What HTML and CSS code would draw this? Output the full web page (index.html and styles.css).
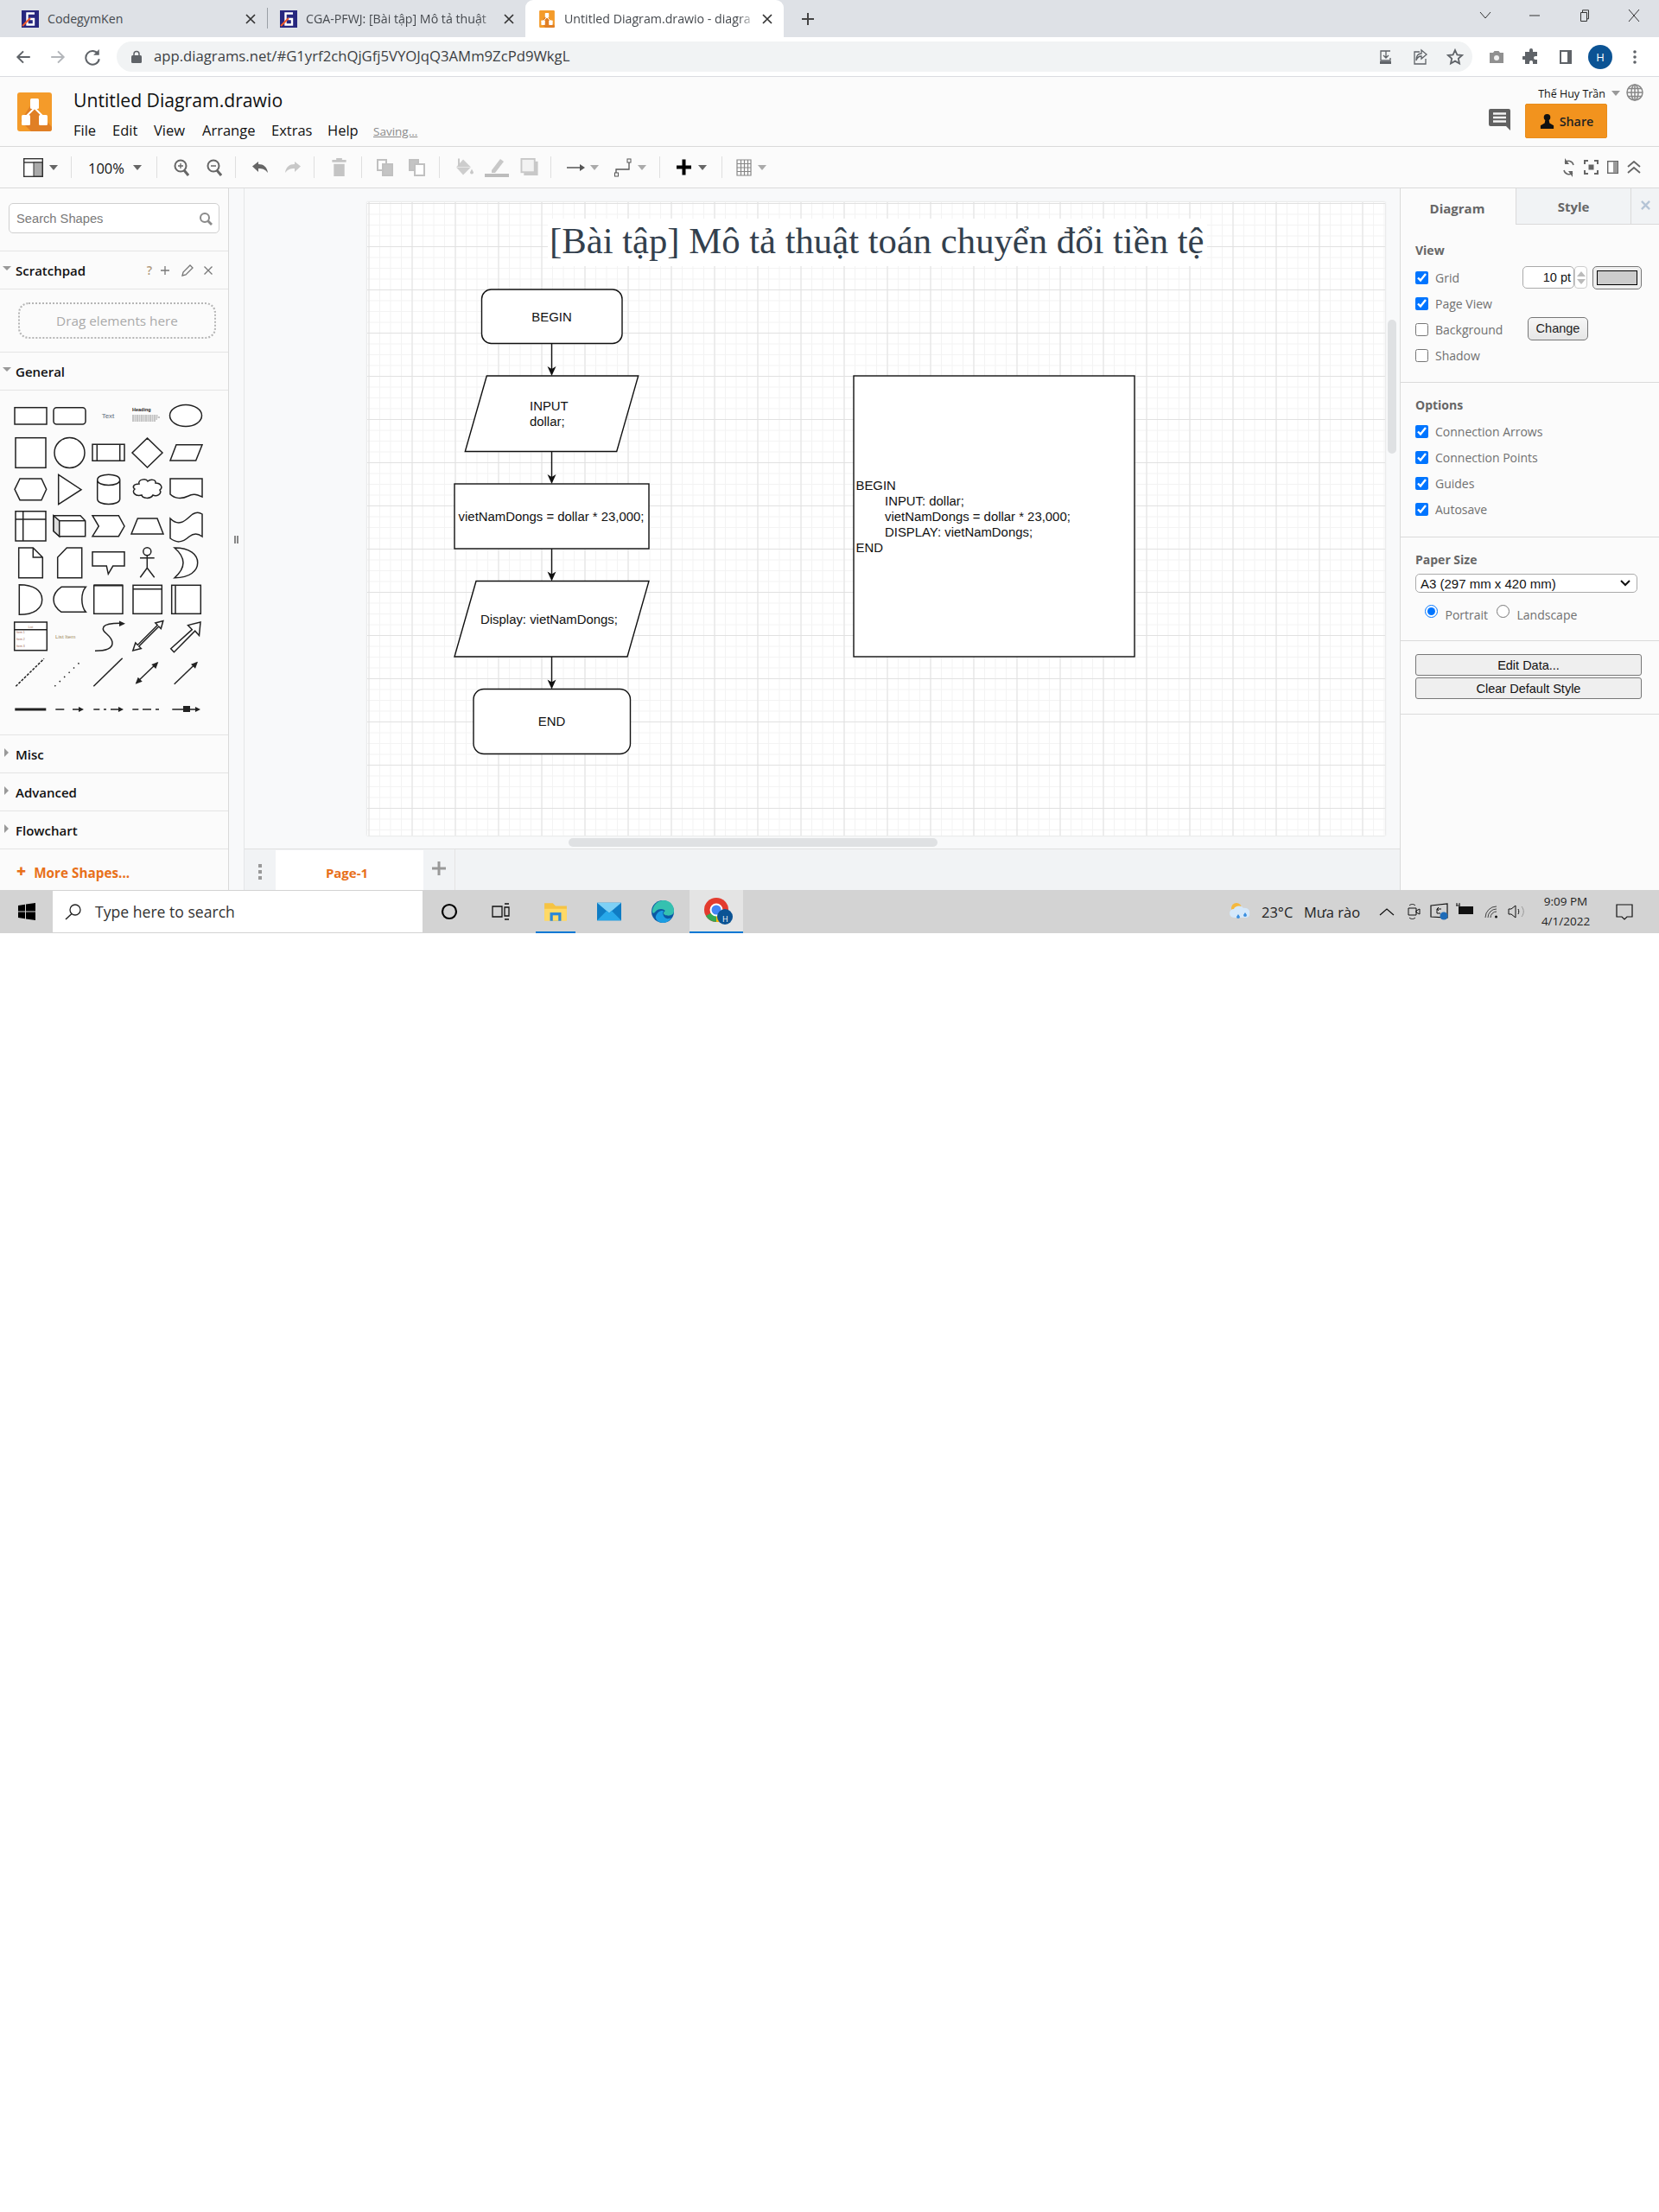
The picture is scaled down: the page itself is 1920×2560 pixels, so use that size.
FILE: index.html
```html
<!DOCTYPE html>
<html lang="en">
<head>
<meta charset="utf-8">
<title>Untitled Diagram.drawio - diagrams.net</title>
<link rel="stylesheet" href="styles.css">
</head>
<body>
<div class="screen">
  <svg class="defs" width="0" height="0">
    <defs>
      <symbol id="cg" viewBox="0 0 20 20"><rect width="20" height="20" fill="#27277f"/><path d="M15 3.500H6.500v13H14v-6.500H9.500" fill="none" stroke="#fff" stroke-width="2.400"/><path d="M1 18 10 9" stroke="#f0592a" stroke-width="2"/></symbol>
      <symbol id="dio" viewBox="0 0 40 45"><rect width="40" height="45" rx="3" fill="#f49b2a"/><path d="M16 14 40 40v2a3 3 0 0 1-3 3H16L4 33Z" fill="#e07f25"/><path d="M20 18 10 28M20 18l10 10" stroke="#fff" stroke-width="2"/><rect x="15" y="7" width="10" height="12" rx="1.500" fill="#fff"/><rect x="5" y="26" width="10" height="12" rx="1.500" fill="#fff"/><rect x="25" y="26" width="10" height="12" rx="1.500" fill="#fff"/></symbol>
    </defs>
  </svg>

  <div class="tabstrip">
    <div class="tab">
      <svg class="fav"><use href="#cg"/></svg><span class="tab-title">CodegymKen</span>
      <svg class="tab-x" viewBox="0 0 12 12"><path d="M1 1l10 10M11 1 1 11"/></svg>
    </div>
    <div class="tab tab-sep">
      <svg class="fav"><use href="#cg"/></svg><span class="tab-title fade">CGA-PFWJ: [Bài tập] Mô tả thuật</span>
      <svg class="tab-x" viewBox="0 0 12 12"><path d="M1 1l10 10M11 1 1 11"/></svg>
    </div>
    <div class="tab tab-active">
      <svg class="fav"><use href="#dio"/></svg><span class="tab-title fade">Untitled Diagram.drawio - diagra</span>
      <svg class="tab-x" viewBox="0 0 12 12"><path d="M1 1l10 10M11 1 1 11"/></svg>
    </div>
    <svg class="newtab" viewBox="0 0 16 16"><path d="M8 1v14M1 8h14"/></svg>
    <div class="winctl">
      <div class="wc"><svg viewBox="0 0 14 10"><path d="M1 1l6 7 6-7"/></svg></div>
      <div class="wc"><svg viewBox="0 0 14 10"><path d="M1 5h12"/></svg></div>
      <div class="wc"><svg viewBox="0 0 14 14"><path d="M2.500 3.500h7v10h-7zM4.500 3.500V.8h7v10H9.500"/></svg></div>
      <div class="wc"><svg viewBox="0 0 14 14"><path d="M1 0l12 14M13 0 1 14"/></svg></div>
    </div>
  </div>

  <div class="addressrow">
    <div class="nav"><svg viewBox="0 0 18 18"><path d="M16 9H3M9 3 3 9l6 6" class="s-dark"/></svg></div>
    <div class="nav"><svg viewBox="0 0 18 18"><path d="M2 9h13M9 3l6 6-6 6" class="s-light"/></svg></div>
    <div class="nav"><svg viewBox="0 0 18 18"><path d="M15 6a7 7 0 1 0 1 5" class="s-dark"/><path d="M16 1v6h-6z" fill="#5f6368"/></svg></div>
    <div class="omnibox">
      <svg class="lock" viewBox="0 0 12 15"><path d="M3 7V4.500a3 3 0 0 1 6 0V7" fill="none" stroke="#5f6368" stroke-width="1.500"/><rect y="6" width="12" height="9" rx="1.500" fill="#5f6368"/></svg>
      <span class="url">app.diagrams.net/#G1yrf2chQjGfj5VYOJqQ3AMm9ZcPd9WkgL</span>
      <div class="omni-right">
        <div class="nav"><svg viewBox="0 0 20 20"><path d="M15 3H4v11h11V11M10 3v8M7 8l3 3 3-3" class="s-dark s-thin"/><rect x="3" y="15" width="13" height="3" fill="#5f6368"/></svg></div>
        <div class="nav"><svg viewBox="0 0 20 20"><path d="M9 4H3v14h13v-6M11 2l6 5-6 5V9c-4 0-5 2-6 5 0-5 2-8 6-8z" class="s-dark s-thin"/></svg></div>
        <div class="nav"><svg viewBox="0 0 20 20"><path d="m10 2 2.400 5.400 5.600.6-4.200 3.800 1.200 5.700L10 14.600l-5 2.900 1.200-5.700L2 8l5.600-.6z" class="s-dark"/></svg></div>
      </div>
    </div>
    <div class="extras">
      <div class="nav"><svg viewBox="0 0 20 20"><path d="M2 5h4l1.500-2h5L14 5h4v12H2z" fill="#909090"/><circle cx="10" cy="11" r="3" fill="#f1f1f1"/></svg></div>
      <div class="nav"><svg viewBox="0 0 20 20"><path d="M8 2a2 2 0 0 1 4 0v2h5v5h-2a2 2 0 0 0 0 4h2v5h-5v-2a2 2 0 0 0-4 0v2H3v-5H1a2 2 0 0 1 0-4h2V4h5z" fill="#5f6368"/></svg></div>
      <div class="nav"><svg viewBox="0 0 20 20"><rect x="3" y="2" width="14" height="16" fill="#5f6368"/><rect x="5" y="4" width="7" height="12" fill="#fff"/></svg></div>
      <div class="avatar">H</div>
      <div class="nav"><svg viewBox="0 0 20 20"><circle cx="10" cy="4" r="1.800" fill="#5f6368"/><circle cx="10" cy="10" r="1.800" fill="#5f6368"/><circle cx="10" cy="16" r="1.800" fill="#5f6368"/></svg></div>
    </div>
  </div>

  <header class="appheader">
    <svg class="logo"><use href="#dio"/></svg>
    <div class="titlecol">
      <div class="doctitle">Untitled Diagram.drawio</div>
      <nav class="menu">
        <span>File</span><span>Edit</span><span>View</span><span>Arrange</span><span>Extras</span><span>Help</span><span class="saving">Saving...</span>
      </nav>
    </div>
    <div class="usercol">
      <div class="userrow">
        <span class="username">Thế Huy Trần</span><i class="caret"></i>
        <svg class="globe" viewBox="0 0 20 20"><g fill="none" stroke="#888" stroke-width="1.500"><circle cx="10" cy="10" r="9"/><ellipse cx="10" cy="10" rx="4" ry="9"/><path d="M1 10h18M2.500 5.500h15M2.500 14.500h15M10 1v18"/></g></svg>
      </div>
      <div class="sharerow">
        <svg class="chat" viewBox="0 0 25 25"><path d="M2 0h21a2 2 0 0 1 2 2v18l0 5-5-5H2a2 2 0 0 1-2-2V2a2 2 0 0 1 2-2z" fill="#616161"/><path d="M5 5.500h15M5 10h15M5 14.500h15" stroke="#f4f4f4" stroke-width="2.500"/></svg>
        <div class="sharebtn">
          <svg viewBox="0 0 20 20"><circle cx="10" cy="5" r="4" fill="#111"/><path d="M8 7h4l1 5 5 3v4H2v-4l5-3z" fill="#111"/></svg>
          <span>Share</span>
        </div>
      </div>
    </div>
  </header>

  <div class="toolbar">
    <div class="tg g1">
      <svg class="i23" viewBox="0 0 23 22"><rect x=".7" y=".7" width="21.600" height="20.600" fill="#fff" stroke="#333" stroke-width="1.400"/><path d="M1 5h21" stroke="#333" stroke-width="1.400"/><rect x="12" y="5" width="10" height="16" fill="#aaa" stroke="#333"/></svg><i class="caret"></i>
    </div>
    <div class="tg g2"><span class="zoomtxt">100%</span><i class="caret"></i></div>
    <div class="tg g3">
      <svg class="i18" viewBox="0 0 18 20"><circle cx="8" cy="8" r="6.500" fill="none" stroke="#666" stroke-width="2"/><path d="m12 13 5 6" stroke="#666" stroke-width="3"/><path d="M5 8h6M8 5v6" stroke="#666" stroke-width="1.300"/></svg>
      <svg class="i18" viewBox="0 0 18 20"><circle cx="8" cy="8" r="6.500" fill="none" stroke="#666" stroke-width="2"/><path d="m12 13 5 6" stroke="#666" stroke-width="3"/><path d="M5 8h6" stroke="#666" stroke-width="1.500"/></svg>
    </div>
    <div class="tg g4">
      <svg class="i20" viewBox="0 0 20 14"><path d="M8 3C14 3 18 6 19 13 16 9 13 8 8 8v4L1 5.500 8 0z" fill="#666"/></svg>
      <svg class="i20" viewBox="0 0 20 14"><path d="M12 3C6 3 2 6 1 13 4 9 7 8 12 8v4l7-6.500L12 0z" fill="#c8c8c8"/></svg>
    </div>
    <div class="tg g5">
      <svg class="i17" viewBox="0 0 17 22"><path d="M5 0h7v2h5v3H0V2h5zM2 7h13v15H2z" fill="#c4c4c4"/></svg>
    </div>
    <div class="tg g6">
      <svg class="i20" viewBox="0 0 20 20"><rect x="1" y="1" width="10" height="12" fill="#fff" stroke="#c0c0c0" stroke-width="2"/><rect x="7" y="6" width="11" height="13" fill="#c4c4c4" stroke="#c0c0c0" stroke-width="2"/></svg>
      <svg class="i20" viewBox="0 0 20 20"><rect x="1" y="1" width="10" height="12" fill="#c4c4c4" stroke="#c0c0c0" stroke-width="2"/><rect x="7" y="6" width="11" height="13" fill="#fff" stroke="#c0c0c0" stroke-width="2"/></svg>
    </div>
    <div class="tg g7">
      <svg class="i22" viewBox="0 0 22 20"><path d="M10 1 19 10 10 19 2 10z" fill="#cdcdcd"/><path d="M2 10h17" stroke="#e6e6e6"/><path d="M4 0h2v9H4zM20 12l2 4a2 2 0 0 1-4 0z" fill="#c8c8c8"/></svg>
      <svg class="i28" viewBox="0 0 28 22"><path d="M8 14 18 1l4 3-10 13H8z" fill="#c8c8c8"/><rect y="18" width="28" height="4" fill="#bdbdbd"/></svg>
      <svg class="i22" viewBox="0 0 22 22"><rect x="4" y="4" width="17" height="17" fill="#c8c8c8"/><rect x="1" y="1" width="16" height="16" fill="#f2f2f2" stroke="#c8c8c8" stroke-width="2"/></svg>
    </div>
    <div class="tg g8">
      <svg class="i21" viewBox="0 0 21 10"><path d="M0 5h16" stroke="#555" stroke-width="1.500"/><path d="m15 1 6 4-6 4z" fill="#555"/></svg><i class="caret c-light"></i>
      <svg class="i21b" viewBox="0 0 21 22"><path d="M2 20v-7h15V3" fill="none" stroke="#555" stroke-width="1.300"/><rect x=".5" y="17" width="4" height="4" fill="#fff" stroke="#555"/><rect x="15" y="1" width="4" height="4" fill="#fff" stroke="#555"/></svg><i class="caret c-light"></i>
    </div>
    <div class="tg g9">
      <svg class="i17" viewBox="0 0 17 20"><path d="M6.500 1h4v7H17v4h-6.500v7h-4v-7H0V8h6.500z" fill="#000"/></svg><i class="caret"></i>
    </div>
    <div class="tg g10">
      <svg class="i18" viewBox="0 0 18 20"><path d="M1 1h16v18H1zM1 5.500h16M1 10h16M1 14.500h16M5.500 1v18M9.500 1v18M13.500 1v18" fill="none" stroke="#888" stroke-width="1.200"/></svg><i class="caret c-light"></i>
    </div>
    <div class="tb-right">
      <svg class="i15" viewBox="0 0 15 24"><path d="M13 9A6 6 0 0 0 3 6M2 15a6 6 0 0 0 10 3" fill="none" stroke="#666" stroke-width="1.500"/><path d="M3 1v7h5zM12 23v-7H7z" fill="#666"/></svg>
      <svg class="i17s" viewBox="0 0 17 17"><path d="M1 5V1h4M12 1h4v4M16 12v4h-4M5 16H1v-4" fill="none" stroke="#666" stroke-width="2"/><rect x="5.500" y="5.500" width="6" height="6" fill="#666"/></svg>
      <svg class="i13" viewBox="0 0 13 15"><rect x=".7" y=".7" width="11.600" height="13.600" fill="#fff" stroke="#666" stroke-width="1.400"/><rect x="7" y="1" width="5" height="13" fill="#999"/></svg>
      <svg class="i16" viewBox="0 0 16 15"><path d="m1 7 7-6 7 6M1 14l7-6 7 6" fill="none" stroke="#666" stroke-width="1.800"/></svg>
    </div>
  </div>

  <main class="main">
    <aside class="sidebar">
      <div class="searchwrap">
        <div class="searchbox"><span>Search Shapes</span>
          <svg viewBox="0 0 16 16"><circle cx="7" cy="7" r="5" fill="none" stroke="#8a8a8a" stroke-width="2"/><path d="m10.500 10.500 4.500 4.500" stroke="#8a8a8a" stroke-width="2.800"/></svg>
        </div>
      </div>
      <div class="sechead"><i class="tri-down"></i><span>Scratchpad</span>
        <div class="sp-tools">
          <b>?</b>
          <svg viewBox="0 0 12 12"><path d="M6 1v10M1 6h10"/></svg>
          <svg viewBox="0 0 14 14"><path d="M1 13l1-4 8-8 3 3-8 8z"/></svg>
          <svg viewBox="0 0 12 12"><path d="M1.500 1.500l9 9M10.500 1.500l-9 9"/></svg>
        </div>
      </div>
      <div class="dropwrap"><div class="dropzone">Drag elements here</div></div>
      <div class="sechead"><i class="tri-down"></i><span>General</span></div>
      <div class="palette">
        <svg viewBox="0 452 265 399" width="265" height="399">
          <g class="sh">
            <rect x="17" y="471.700" width="37" height="19.300"/>
            <rect x="62" y="471.700" width="37" height="19.300" rx="3.500"/>
            <ellipse cx="215" cy="481" rx="18.500" ry="12.500"/>
            <rect x="18" y="506.700" width="35" height="34.600"/>
            <circle cx="80.500" cy="524" r="17.500"/>
            <path d="M107 514.300h37v19h-37zM112.300 514.300v19M138.700 514.300v19"/>
            <path d="M170.500 507l17.500 17-17.500 17-17.500-17z"/>
            <path d="M204 514.700h30l-7.300 18.300H197z"/>
            <path d="M17 566.300 23 554h25l5.700 12.300L48 578.700H23z"/>
            <path d="M67.700 549.300 94 566.700l-26.300 17z"/>
            <path d="M112.700 555.500v22c0 8 26 8 26 0v-22c0-8.500-26-8.500-26 0c0 8 26 8 26 0"/>
            <path d="M161 560c-2-5 8-7 10-3 3-3 10-2 9 2 6 0 9 5 5 8 3 5-4 8-8 6-3 5-12 4-13 0-8 2-12-4-8-7-3-2-2-6 5-6z"/>
            <path d="M197 554h37v21c-7-3-11-4-16-1-8 4-16 3-21-2z"/>
            <path d="M18 591.700h35V626H18zM26.700 591.700V626M18 601h35"/>
            <path d="M62 596.700h31l5.700 6v18h-30l-6.700-6z" />
            <path d="M62 596.700l6.700 6v18l-6.700-6z" class="cubeside"/>
            <path d="M68.700 602.700h30"/>
            <path d="M107 596.700h30.300L144 609l-6.700 11.700H107l7.300-11.700z"/>
            <path d="M159.300 600H182l7 18h-37z"/>
            <path d="M197 600c12 12 20-1 26-5 5-3 8-2 11 0v26c-5-4-10-4-15 0-9 8-15 7-22 2z"/>
            <path d="M21.700 634H38.300l11 11v23.700H21.700zM38.300 634v11h11"/>
            <path d="M77.300 634h17.400v34.700h-28V645z"/>
            <path d="M107 638.700h37V655h-13.300l-5.400 9.300-2-9.300H107z"/>
            <path d="M170.300 643v14.300M162 645.700h16.700M162.300 668.300l8-11 8.400 11"/><circle cx="170.300" cy="638.300" r="4.500"/>
            <path d="M202 634c18 0 26.700 8 26.700 17.300S220 668.700 202 668.700c8-7 10-12 10-17.400S210 641 202 634z"/>
            <path d="M22.300 676.700c17 0 26.400 7 26.400 17.300s-9.400 17.300-26.400 17.300z"/>
            <path d="M71 679.300h28.300c-6 7-6 22 0 29H71c-12-8-12-21 0-29z"/>
            <rect x="108.700" y="677.300" width="33.300" height="33"/>
            <path d="M109 677.500h33" class="thick"/>
            <rect x="154" y="677.300" width="33.300" height="33"/><path d="M154 681.700h33.300"/>
            <rect x="198.700" y="677.300" width="33.600" height="33"/><path d="M203 677.300v33"/>
            <rect x="16.700" y="720" width="37.600" height="32.700"/><path d="M16.700 728.700h37.600"/>
            <path d="M110 753.300c10 0 20-2 20-9 0-10-14-12-10-19 3-4 13-4 19-4" class="open"/>
            <path d="m153.800 753 3-9 2.500 2.500 23-23-2.500-2.500 9-2.500-2.500 9-2.500-2.500-23 23 2.500 2.500z"/>
            <path d="M197.700 750.800l24.600-22.200-4.800-5 14.500-3.600-1.500 15.500-4.800-5.300-24.300 24.500z"/>
            <path d="M18.300 794.300 51 762.300" class="dash1"/>
            <path d="M63.300 794.300 95 764" class="dash2"/>
            <path d="M108.300 794.300 141.700 761.700"/>
            <path d="m158 790 24-23"/>
            <path d="m201.700 791.700 26-25"/>
            <path d="M17.300 821h36" class="thicker"/>
            <path d="M64.300 821h10M84 821h8M108.300 821h7M120 821h3M128 821h12M153.300 821h7M165 821h10M180 821h4M199.300 821h29"/>
          </g>
          <g class="shf">
            <path d="m138 718.500 7 3.200-7 3.200z"/>
            <path d="m156.700 791.700 3-8 5 5zM183.300 766l-8 3 5 5zM229 765.700l-8 3 5 5z"/>
            <path d="m91 818 6 3-6 3zM137 818l6 3-6 3zM226 818l6 3-6 3z"/>
            <rect x="212" y="817" width="8" height="7"/>
          </g>
          <text x="125" y="483.500" class="pal-text">Text</text>
          <text x="153" y="476" class="pal-head">Heading</text>
          <path d="M153 481h30M153 483h32M153 485h29M153 487h27" class="pal-lines"/>
          <text x="35.500" y="726.500" class="pal-list pal-c">List</text>
          <text x="19" y="733" class="pal-list">Item 1</text>
          <text x="19" y="741" class="pal-list">Item 2</text>
          <text x="19" y="749" class="pal-list">Item 3</text>
          <text x="64" y="738.500" class="pal-item">List Item</text>
        </svg>
      </div>
      <div class="sechead"><i class="tri-right"></i><span>Misc</span></div>
      <div class="sechead"><i class="tri-right"></i><span>Advanced</span></div>
      <div class="sechead"><i class="tri-right"></i><span>Flowchart</span></div>
      <div class="moreshapes"><b class="plus">+</b><span>More Shapes...</span></div>
    </aside>
    <div class="splitter"><i></i></div>
    <section class="canvas">
      <div class="viewport">
        <div class="page">
          <svg viewBox="425 234 1178 733" width="1178" height="733" class="diagram">
            <rect x="634" y="253" width="763" height="55" class="titlebg"/>
            <text x="636" y="293" class="d-title">[Bài tập] Mô tả thuật toán chuyển đổi tiền tệ</text>
            <g class="node">
              <rect x="557.500" y="335" width="162.500" height="62.500" rx="11"/>
              <path d="M563.300 435h175.400l-25 87.500H538.300z"/>
              <rect x="526" y="560" width="225" height="75"/>
              <path d="M551 672.500h200l-25 87.500H526z"/>
              <rect x="548" y="797.500" width="181.500" height="75" rx="12"/>
              <rect x="988" y="435" width="325" height="325"/>
            </g>
            <g class="edge">
              <path d="M638.500 397.500V430M638.500 522.500V555M638.500 635V667.500M638.500 760V792.500"/>
            </g>
            <g class="head">
              <path d="M638.500 435l-5-11 5 3 5-3zM638.500 560l-5-11 5 3 5-3zM638.500 672.500l-5-11 5 3 5-3zM638.500 797.500l-5-11 5 3 5-3z"/>
            </g>
            <g class="d-text">
              <text x="638.500" y="372" class="mid">BEGIN</text>
              <text x="613" y="474.500">INPUT</text>
              <text x="613" y="492.500">dollar;</text>
              <text x="638" y="603" class="mid">vietNamDongs = dollar * 23,000;</text>
              <text x="635.500" y="722" class="mid">Display: vietNamDongs;</text>
              <text x="638.500" y="840" class="mid">END</text>
              <text x="990.500" y="567">BEGIN</text>
              <text x="1024" y="585">INPUT: dollar;</text>
              <text x="1024" y="603">vietNamDongs = dollar * 23,000;</text>
              <text x="1024" y="621">DISPLAY: vietNamDongs;</text>
              <text x="990.500" y="639">END</text>
            </g>
          </svg>
        </div>
        <i class="scroll-v"></i>
        <i class="scroll-h"></i>
      </div>
      <div class="pagetabs">
        <div class="pt-menu"><i></i><i></i><i></i></div>
        <div class="pt-page">Page-1</div>
        <div class="pt-add"><svg viewBox="0 0 16 16"><path d="M8 0v16M0 8h16"/></svg></div>
      </div>
    </section>
    <aside class="panel">
      <div class="ptabs">
        <div class="ptab ptab-on">Diagram</div>
        <div class="ptab">Style</div>
        <div class="ptab-x"><svg viewBox="0 0 12 12"><path d="M1 1l10 10M11 1 1 11"/></svg></div>
      </div>
      <div class="psec">
        <h3>View</h3>
        <div class="prow"><input type="checkbox" checked><span>Grid</span>
          <div class="gridctl">
            <div class="ptbox">10 pt</div>
            <div class="spin"><i class="up"></i><i class="dn"></i></div>
            <div class="swatch"><i></i></div>
          </div>
        </div>
        <div class="prow"><input type="checkbox" checked><span>Page View</span></div>
        <div class="prow"><input type="checkbox"><span>Background</span><button class="changebtn">Change</button></div>
        <div class="prow"><input type="checkbox"><span>Shadow</span></div>
      </div>
      <div class="psec psec2">
        <h3>Options</h3>
        <div class="prow"><input type="checkbox" checked><span>Connection Arrows</span></div>
        <div class="prow"><input type="checkbox" checked><span>Connection Points</span></div>
        <div class="prow"><input type="checkbox" checked><span>Guides</span></div>
        <div class="prow"><input type="checkbox" checked><span>Autosave</span></div>
      </div>
      <div class="psec psec3">
        <h3>Paper Size</h3>
        <div class="selectbox"><span>A3 (297 mm x 420 mm)</span><svg viewBox="0 0 12 8"><path d="m1 1 5 5 5-5"/></svg></div>
        <div class="radios">
          <input type="radio" name="o" checked><span>Portrait</span>
          <input type="radio" name="o"><span>Landscape</span>
        </div>
      </div>
      <div class="psec4">
        <button class="widebtn">Edit Data...</button>
        <button class="widebtn">Clear Default Style</button>
      </div>
    </aside>
  </main>

  <footer class="taskbar">
    <div class="winbtn"><svg viewBox="0 0 20 20"><path d="M0 3l8-1.200V9.500H0zM9 1.600 20 0v9.500H9zM0 10.500h8v7.700L0 17zM9 10.500h11V20L9 18.400z" fill="#000"/></svg></div>
    <div class="tsearch">
      <svg viewBox="0 0 20 20"><circle cx="12" cy="8" r="6" fill="none" stroke="#222" stroke-width="1.300"/><path d="M8 12.500 1 19" stroke="#222" stroke-width="1.500"/></svg>
      <span>Type here to search</span>
    </div>
    <div class="tcell"><svg class="cortana" viewBox="0 0 20 20"><circle cx="10" cy="10" r="8" fill="none" stroke="#000" stroke-width="2.200"/></svg></div>
    <div class="tcell tview"><svg class="taskv" viewBox="0 0 22 20"><path d="M1 4h11v12H1zM15 1h5M15 19h5M15 5h5v10h-5z" fill="none" stroke="#111" stroke-width="1.300"/></svg></div>
    <div class="tapp on">
      <svg viewBox="0 0 26 24"><path d="M1 3h9l3 3h12v15H1z" fill="#f6c343"/><rect x="1" y="9" width="24" height="13" fill="#ffd966"/><rect x="7" y="13" width="12" height="9" fill="#2b88d8"/><rect x="10" y="16" width="6" height="6" fill="#ffd966"/></svg>
    </div>
    <div class="tapp">
      <svg viewBox="0 0 30 24"><rect y="1" width="30" height="22" fill="#0f7cc4"/><path d="M0 1h30L15 14z" fill="#7ed0f5"/><path d="M0 23 12 11l3 3 3-3 12 12z" fill="#28a8ea"/></svg>
    </div>
    <div class="tapp">
      <svg viewBox="0 0 28 28"><circle cx="14" cy="14" r="14" fill="#0c59a4"/><path d="M1 15C1 6 8 0 15 0c8 0 13 6 13 13 0 4-3 6-7 6-3 0-6-1-6-3 0-1 1-2 2-3-2-3-8-3-11 0-2 2-3 4-5 2z" fill="#35c1b0"/><path d="M5 21c1-5 5-9 10-8-2 4 0 9 5 10l5-1c-3 4-7 6-11 6-5 0-8-3-9-7z" fill="#1b9de2"/></svg>
    </div>
    <div class="tapp on active">
      <svg viewBox="0 0 34 32"><circle cx="14" cy="14" r="14" fill="#e33b2e"/><path d="M14 14 2 21a14 14 0 0 0 12 7l6-10z" fill="#34a853"/><path d="M14 14h14a14 14 0 0 1-14 14z" fill="#fbbc05"/><circle cx="14" cy="14" r="6.500" fill="#4285f4" stroke="#fff" stroke-width="2"/><circle cx="24" cy="22" r="9" fill="#0b5394"/></svg>
      <span class="chromeh">H</span>
    </div>
    <div class="tray">
      <svg class="t-weather" viewBox="0 0 26 22"><circle cx="9" cy="7" r="6" fill="#f5b83d"/><path d="M6 18a5 5 0 0 1 0-10c1-4 9-5 11-1 5-1 8 3 7 6 1 3-2 5-4 5z" fill="#d5e8fa"/><path d="M11 14l2 3a2 2 0 1 1-4 0zM19 12l2 3a2 2 0 1 1-4 0z" fill="#3a8fe0"/></svg>
      <span class="t-temp">23°C</span>
      <span class="t-cond">Mưa rào</span>
      <svg class="t-chev" viewBox="0 0 18 10"><path d="m1 9 8-7 8 7" fill="none" stroke="#111" stroke-width="1.200"/></svg>
      <svg class="t-meet" viewBox="0 0 15 20"><path d="M1 6h9v8H1zM10 9l4-2v6l-4-2zM2 3c2-2 5-2 7 0M2 17c2 2 5 2 7 0" fill="none" stroke="#111"/></svg>
      <svg class="t-screen" viewBox="0 0 22 20"><path d="M1 3 20 1v16l-19-1z" fill="none" stroke="#111" stroke-width="1.200"/><path d="M13 7H8v5h4M10 5l-2 2 2 2" fill="none" stroke="#111"/><circle cx="16" cy="15" r="4.500" fill="#1f6cb8"/></svg>
      <svg class="t-batt" viewBox="0 0 21 14"><rect x="3" y="4" width="17" height="9" fill="#111"/><path d="M1 0v3M4 0v3M0 3h5" stroke="#111"/></svg>
      <svg class="t-wifi" viewBox="0 0 16 16"><path d="M1 15A13 13 0 0 1 14 2M4 15a10 10 0 0 1 10-10M7 15a7 7 0 0 1 7-7" fill="none" stroke="#444"/><circle cx="13.500" cy="14" r="1.500" fill="#111"/></svg>
      <svg class="t-vol" viewBox="0 0 20 18"><path d="M1 6h3l5-4v14l-5-4H1zM12 6c1 2 1 4 0 6" fill="none" stroke="#111"/><path d="M16 3c3 4 3 8 0 12" fill="none" stroke="#999"/></svg>
      <div class="t-clock"><span>9:09 PM</span><span>4/1/2022</span></div>
      <svg class="t-note" viewBox="0 0 20 20"><path d="M1 2h18v14h-6l-3 3-3-3H1z" fill="none" stroke="#111" stroke-width="1.200"/></svg>
    </div>
  </footer>
</div>
</body>
</html>
```

FILE: styles.css
```css
* { box-sizing: border-box; }
html, body { margin: 0; padding: 0; background: #fff; }
body { font-family: "Open Sans", "Liberation Sans", sans-serif; color: #111; }
.screen { width: 1920px; height: 1080px; display: flex; flex-direction: column; overflow: hidden; }
.defs { position: absolute; }
svg { display: block; flex: none; }

/* Tab strip */
.tabstrip { height: 43px; background: #dee1e6; display: flex; align-items: stretch; padding-left: 10px; }
.tab { width: 299px; display: flex; align-items: center; padding: 0 13px 0 15px; position: relative; }
.tab-sep::before { content: ""; position: absolute; left: 0; top: 9px; height: 24px; width: 1px; background: #9aa0a6; }
.tab-active { background: #fff; border-radius: 9px 9px 0 0; }
.fav { width: 20px; height: 20px; margin-right: 10px; }
.tab-title { flex: 1; font-size: 14.200px; color: #45494e; white-space: nowrap; }
.fade { -webkit-mask-image: linear-gradient(90deg, #000 90%, transparent); mask-image: linear-gradient(90deg, #000 90%, transparent); }
.tab-x { width: 12px; height: 12px; margin-left: 6px; fill: none; stroke: #333; stroke-width: 1.700; }
.newtab { width: 16px; height: 16px; margin: 14px 0 0 20px; fill: none; stroke: #444; stroke-width: 2; }
.winctl { margin-left: auto; display: flex; }
.wc { width: 57.500px; height: 36px; display: flex; align-items: center; justify-content: center; }
.wc svg { width: 14px; height: 14px; fill: none; stroke: #333; stroke-width: 1; }

/* Address row */
.addressrow { height: 46px; background: #fff; border-bottom: 1px solid #dadce0; display: flex; align-items: center; padding-left: 7px; }
.nav { width: 40px; height: 35px; display: flex; align-items: center; justify-content: center; }
.nav svg { width: 20px; height: 20px; }
.s-dark, .s-light { fill: none; stroke-width: 1.800; }
.s-dark { stroke: #5f6368; }
.s-light { stroke: #b3b6ba; }
.s-thin { stroke-width: 1.300; }
.omnibox { margin-left: 8px; width: 1569px; height: 35px; border-radius: 18px; background: #f1f3f4; display: flex; align-items: center; padding-left: 17px; }
.lock { width: 12px; height: 15px; }
.url { margin-left: 14px; font-size: 16.700px; color: #3c4043; padding-bottom: 2px; }
.omni-right { margin-left: auto; display: flex; }
.extras { margin-left: 8px; display: flex; align-items: center; }
.avatar { width: 28px; height: 28px; margin: 0 6px; border-radius: 50%; background: #0b5394; color: #fff; font-size: 13px; display: flex; align-items: center; justify-content: center; }

/* App header */
.appheader { height: 81px; background: #fbfbfb; border-bottom: 1px solid #dadada; display: flex; padding-left: 20px; }
.logo { width: 40px; height: 45px; margin-top: 18px; }
.titlecol { margin-left: 25px; }
.doctitle { margin-top: 12px; font-size: 21.200px; line-height: 30px; color: #111; }
.menu { display: flex; margin-top: 8px; font-size: 16.500px; line-height: 24px; }
.menu span:nth-child(1) { width: 45px; }
.menu span:nth-child(2) { width: 48px; }
.menu span:nth-child(3) { width: 56px; }
.menu span:nth-child(4) { width: 80px; }
.menu span:nth-child(5) { width: 65px; }
.menu span:nth-child(6) { width: 53px; }
.menu .saving { font-size: 13.500px; color: #8a8a8a; text-decoration: underline; margin-top: 1px; }
.usercol { margin-left: auto; display: flex; flex-direction: column; align-items: flex-end; }
.userrow { display: flex; align-items: center; height: 24px; margin-top: 7px; padding-right: 18px; }
.username { font-size: 12.500px; }
.caret { display: block; flex: none; width: 0; height: 0; border-left: 5.500px solid transparent; border-right: 5.500px solid transparent; border-top: 6px solid #666; }
.userrow .caret { margin: 0 7px; border-top-color: #999; }
.globe { width: 20px; height: 20px; margin-top: -3px; }
.sharerow { display: flex; align-items: center; margin-top: 0; padding-right: 60px; }
.chat { width: 25px; height: 25px; margin-right: 17px; margin-top: -3px; }
.sharebtn { width: 95px; height: 40px; background: #f2931e; border: 1px solid #e88d1c; border-radius: 2px; display: flex; align-items: center; justify-content: center; gap: 5px; font-size: 14.300px; font-weight: 600; color: #222; }
.sharebtn svg { width: 19px; height: 19px; }

/* Toolbar */
.toolbar { height: 48px; background: #fbfbfb; border-bottom: 1px solid #dadada; display: flex; align-items: center; }
.tg { height: 25px; display: flex; align-items: center; border-right: 1px solid #dfdfdf; }
.g1 { width: 83px; padding-left: 27px; gap: 7px; }
.g2 { width: 99px; padding-left: 19px; gap: 9px; }
.g3 { width: 91px; padding-left: 19px; gap: 20px; }
.g4 { width: 91px; padding-left: 18px; gap: 18px; }
.g5 { width: 55px; padding-left: 20px; }
.g6 { width: 90px; padding-left: 17px; gap: 17px; }
.g7 { width: 129px; padding-left: 17px; gap: 13px; }
.g8 { width: 126px; padding-left: 18px; gap: 6px; }
.g8 .i21b { margin-left: 12px; }
.g9 { width: 72px; padding-left: 19px; gap: 8px; }
.g10 { border-right: 0; padding-left: 16px; gap: 7px; }
.c-light { border-top-color: #aaa; }
.zoomtxt { font-size: 16.500px; width: 43px; padding-top: 2px; white-space: nowrap; }
.i23 { width: 23px; height: 22px; }
.i18 { width: 18px; height: 20px; }
.i20 { width: 20px; height: 20px; }
.g4 .i20 { height: 14px; }
.i17 { width: 17px; height: 21px; }
.i22 { width: 22px; height: 21px; }
.i28 { width: 28px; height: 22px; }
.i21 { width: 21px; height: 10px; }
.i21b { width: 21px; height: 22px; }
.i15 { width: 15px; height: 24px; }
.i17s { width: 17px; height: 17px; }
.i13 { width: 13px; height: 15px; }
.i16 { width: 16px; height: 15px; }
.tb-right { margin-left: auto; display: flex; align-items: center; gap: 10px; padding-right: 21px; }

/* Main */
.main { height: 812px; display: flex; background: #f8f9fa; }
.sidebar { width: 265px; background: #fbfbfb; border-right: 1px solid #dadada; font-size: 14px; }
.searchwrap { height: 73px; padding: 17px 10px 0; border-bottom: 1px solid #e4e4e4; }
.searchbox { height: 35px; background: #fff; border: 1px solid #cfcfcf; border-radius: 5px; display: flex; align-items: center; justify-content: space-between; padding: 0 7px 0 8px; font-family: "Liberation Sans", sans-serif; font-size: 14.700px; color: #7a7a7a; }
.searchbox svg { width: 16px; height: 16px; }
.sechead { height: 44px; border-bottom: 1px solid #e4e4e4; display: flex; align-items: center; padding-left: 3px; font-size: 15px; font-weight: 600; color: #111; }
.sechead > span { margin-left: 5px; }
.tri-down { width: 0; height: 0; border-left: 5px solid transparent; border-right: 5px solid transparent; border-top: 5px solid #999; margin-top: -4px; }
.tri-right { width: 0; height: 0; margin: -4px 3px 0 2px; border-top: 5px solid transparent; border-bottom: 5px solid transparent; border-left: 5px solid #999; }
.sp-tools { margin-left: auto; padding-right: 17px; display: flex; align-items: center; gap: 11px; }
.sp-tools b { color: #b19a7d; font-weight: 600; font-size: 14px; margin-right: -2px; }
.sp-tools svg { width: 12px; height: 12px; fill: none; stroke: #777; stroke-width: 1.300; }
.sp-tools svg:nth-of-type(2) { width: 14px; height: 14px; margin-left: 2px; }
.dropwrap { height: 73px; padding: 15px 15px 0 21px; border-bottom: 1px solid #e4e4e4; }
.dropzone { height: 42px; width: 229px; border: 2px dotted #b5b5b5; border-radius: 12px; display: flex; align-items: center; justify-content: center; font-size: 15.300px; color: #aaa; }
.palette { height: 399px; border-bottom: 1px solid #e4e4e4; }
.sh { fill: #fff; stroke: #222; stroke-width: 1.500; }
.sh .dash1, .sh .dash2, .sh .thicker, .sh .thick, .sh .open { fill: none; }
.sh .cubeside { fill: #dedede; }
.sh .thick { stroke-width: 2; }
.sh .thicker { stroke-width: 3.200; }
.sh .dash1 { stroke-dasharray: 3 1.500; }
.sh .dash2 { stroke-dasharray: 1.500 6; }
.shf { fill: #222; }
.pal-text { font: 8px "Liberation Sans", sans-serif; fill: #5a6a7a; text-anchor: middle; }
.pal-head { font: bold 5.500px "Liberation Sans", sans-serif; fill: #222; }
.pal-lines { stroke: #777; stroke-width: .8; fill: none; stroke-dasharray: 2 .5; }
.pal-list { font: 3.500px "Liberation Sans", sans-serif; fill: #a06a50; }
.pal-c { text-anchor: middle; }
.pal-item { font: 6.200px "Liberation Sans", sans-serif; fill: #a08a60; }
.moreshapes { height: 47px; display: flex; align-items: center; padding: 6px 0 0 19px; color: #e8701a; font-size: 15.300px; font-weight: 700; }
.plus { font-size: 19px; line-height: 18px; margin: -4px 9px 0 0; }

.splitter { width: 18px; border-right: 1px solid #e4e6e8; display: flex; align-items: flex-start; justify-content: center; }
.splitter i { display: block; width: 5px; height: 9px; margin-top: 402px; border-left: 2px solid #888; border-right: 2px solid #888; }

.canvas { width: 1337px; display: flex; flex-direction: column; }
.viewport { height: 764px; position: relative; overflow: hidden; padding: 16px 0 0 142px; }
.page { width: 1178px; height: 733px; overflow: hidden;
  box-shadow: 0 0 2px #d0d0d0;
  background-color: #fff;
  background-image:
    linear-gradient(#e1e1e1 1px, transparent 1px),
    linear-gradient(90deg, #e1e1e1 1px, transparent 1px),
    linear-gradient(#f3f3f3 1px, transparent 1px),
    linear-gradient(90deg, #f3f3f3 1px, transparent 1px);
  background-size: 50px 50px, 50px 50px, 12.500px 12.500px, 12.500px 12.500px;
  background-position: 0 1px, 1.500px 0, 0 1px, 1.500px 0;
}
.titlebg { fill: #fff; }
.d-title { font: 42.700px "Liberation Serif", serif; fill: #33404d; }
.node { fill: #fff; stroke: #111; stroke-width: 1.400; }
.edge { fill: none; stroke: #111; stroke-width: 1.400; }
.head { fill: #111; }
.d-text text { font: 14.900px "Liberation Sans", sans-serif; fill: #111; }
.d-text .mid { text-anchor: middle; }
.scroll-v { position: absolute; left: 1323px; top: 152px; width: 10px; height: 155px; border-radius: 5px; background: #dfe1e3; }
.scroll-h { position: absolute; left: 375px; top: 752px; width: 427px; height: 10px; border-radius: 5px; background: #dfe1e3; }

.pagetabs { height: 48px; background: #f1f3f5; border-top: 1px solid #e0e0e0; display: flex; }
.pt-menu { width: 36px; display: flex; flex-direction: column; align-items: center; justify-content: center; gap: 3px; padding-top: 4px; }
.pt-menu i { width: 4px; height: 4px; background: #999; }
.pt-page { width: 171px; margin-top: 1px; background: #fff; color: #e8701a; font-size: 15px; font-weight: 700; display: flex; align-items: center; justify-content: center; padding: 6px 6px 0 0; }
.pt-add { width: 37px; border-right: 1px solid #e4e4e4; display: flex; align-items: center; justify-content: center; padding-bottom: 4px; }
.pt-add svg { width: 16px; height: 16px; fill: none; stroke: #999; stroke-width: 3; }

/* Right panel */
.panel { width: 300px; background: #fbfbfb; border-left: 1px solid #dadada; font-size: 14px; color: #707070; }
.ptabs { height: 42px; display: flex; }
.ptab { width: 133px; background: #f1f3f5; border-bottom: 1px solid #dadada; border-left: 1px solid #dadada; display: flex; align-items: center; justify-content: center; font-size: 15px; font-weight: 700; color: #666; }
.ptab-on { background: transparent; border: 0; width: 133px; padding: 4px 2px 0 0; }
.ptab-x { flex: 1; background: #f1f3f5; border-bottom: 1px solid #dadada; border-left: 1px solid #dadada; display: flex; align-items: center; justify-content: center; padding-bottom: 3px; }
.ptab-x svg { width: 11px; height: 11px; fill: none; stroke: #b5c4d6; stroke-width: 2.500; }
.psec { padding: 20px 20px 16px 17px; border-bottom: 1px solid #dadada; }
.psec2, .psec3 { padding-top: 16px; }
.psec2 h3 { margin-bottom: 5px; }
.psec2 { padding-bottom: 17px; }
.psec3 { padding-bottom: 21px; }
h3 { margin: 0 0 6px; font-size: 14px; line-height: 20px; font-weight: 700; color: #666; }
.prow { height: 30px; display: flex; align-items: center; }
.prow input { width: 15px; height: 15px; margin: 0 8px 0 0; flex: none; }
.gridctl { margin-left: auto; display: flex; align-items: center; }
.ptbox { width: 60px; height: 26px; background: #fff; border: 1px solid #aaa; border-radius: 5px; display: flex; align-items: center; justify-content: flex-end; padding-right: 3px; font: 14.500px "Liberation Sans", sans-serif; color: #111; }
.spin { width: 15px; height: 26px; border: 1px solid #ccc; border-radius: 4px; display: flex; flex-direction: column; align-items: center; justify-content: center; gap: 3px; background: #fff; }
.spin i { width: 0; height: 0; border-left: 5px solid transparent; border-right: 5px solid transparent; }
.spin .up { border-bottom: 6px solid #bbb; }
.spin .dn { border-top: 6px solid #bbb; }
.swatch { width: 57px; height: 27px; margin-left: 6px; border: 1px solid #777; border-radius: 5px; background: #efefef; padding: 4px; }
.swatch i { display: block; height: 17px; background: #ccc; border: 1px solid #000; }
.changebtn { margin: -2px 62px 0 auto; width: 70px; height: 27px; padding: 0; background: linear-gradient(#f6f6f6, #e6e6e6); border: 1px solid #777; border-radius: 5px; font: 14.500px "Liberation Sans", sans-serif; color: #222; }
.selectbox { height: 22px; width: 257px; background: #fff; border: 1px solid #aaa; border-radius: 5px; display: flex; align-items: center; justify-content: space-between; padding: 0 7px 0 5px; font: 15px "Liberation Sans", sans-serif; color: #111; }
.selectbox svg { width: 12px; height: 8px; fill: none; stroke: #111; stroke-width: 2; }
.radios { height: 26px; margin-top: 8px; display: flex; align-items: center; padding-left: 11px; }
.radios input { width: 15px; height: 15px; margin: 0 8.500px 0 0; flex: none; }
.radios span { padding-top: 8px; }
.radios span:nth-of-type(1) { width: 59.500px; }
.psec4 { padding: 15px 20px 17px 17px; border-bottom: 1px solid #dadada; display: flex; flex-direction: column; gap: 2px; }
.widebtn { height: 25px; padding: 0; background: #efefef; border: 1px solid #777; border-radius: 3px; font: 14.500px "Liberation Sans", sans-serif; color: #111; }

/* Taskbar */
.taskbar { height: 50px; background: #d3d3d3; display: flex; align-items: center; }
.winbtn { width: 61px; display: flex; justify-content: center; }
.winbtn svg { width: 20px; height: 20px; }
.tsearch { width: 428px; height: 48px; background: #fff; display: flex; align-items: center; padding-left: 14px; font-size: 17.600px; color: #333; }
.tsearch svg { width: 20px; height: 20px; margin-right: 15px; }
.tcell { width: 61px; display: flex; justify-content: center; }
.tview { width: 59px; margin-right: 3px; }
.cortana { width: 20px; height: 20px; }
.taskv { width: 22px; height: 20px; }
.tapp { width: 62px; height: 50px; display: flex; align-items: center; justify-content: center; position: relative; }
.tapp svg { width: 28px; height: 26px; }
.tapp.on::after { content: ""; position: absolute; left: 8px; right: 8px; bottom: 0; height: 2px; background: #0078d4; }
.tapp.active { background: #e4e4e4; }
.tapp.active::after { left: 0; right: 0; }
.tapp.active svg { width: 34px; height: 32px; margin-left: 5px; }
.chromeh { position: absolute; left: 38px; top: 27px; font-size: 9px; color: #fff; }
.tray { margin-left: auto; display: flex; align-items: center; font-size: 16.500px; color: #222; padding-right: 30px; }
.t-weather { width: 26px; height: 22px; }
.t-temp { margin-left: 12px; width: 49px; white-space: nowrap; }
.t-cond { width: 65px; white-space: nowrap; }
.t-chev { width: 18px; height: 10px; margin-left: 22px; }
.t-meet { width: 15px; height: 20px; margin-left: 15px; }
.t-screen { width: 22px; height: 20px; margin-left: 11px; }
.t-batt { width: 21px; height: 14px; margin-left: 8px; margin-top: -6px; }
.t-wifi { width: 16px; height: 16px; margin-left: 12px; }
.t-vol { width: 20px; height: 18px; margin-left: 11px; }
.t-clock { width: 60px; margin-left: 17px; display: flex; flex-direction: column; align-items: center; font-size: 13.500px; line-height: 23px; white-space: nowrap; }
.t-note { width: 20px; height: 20px; margin-left: 28px; }
```
